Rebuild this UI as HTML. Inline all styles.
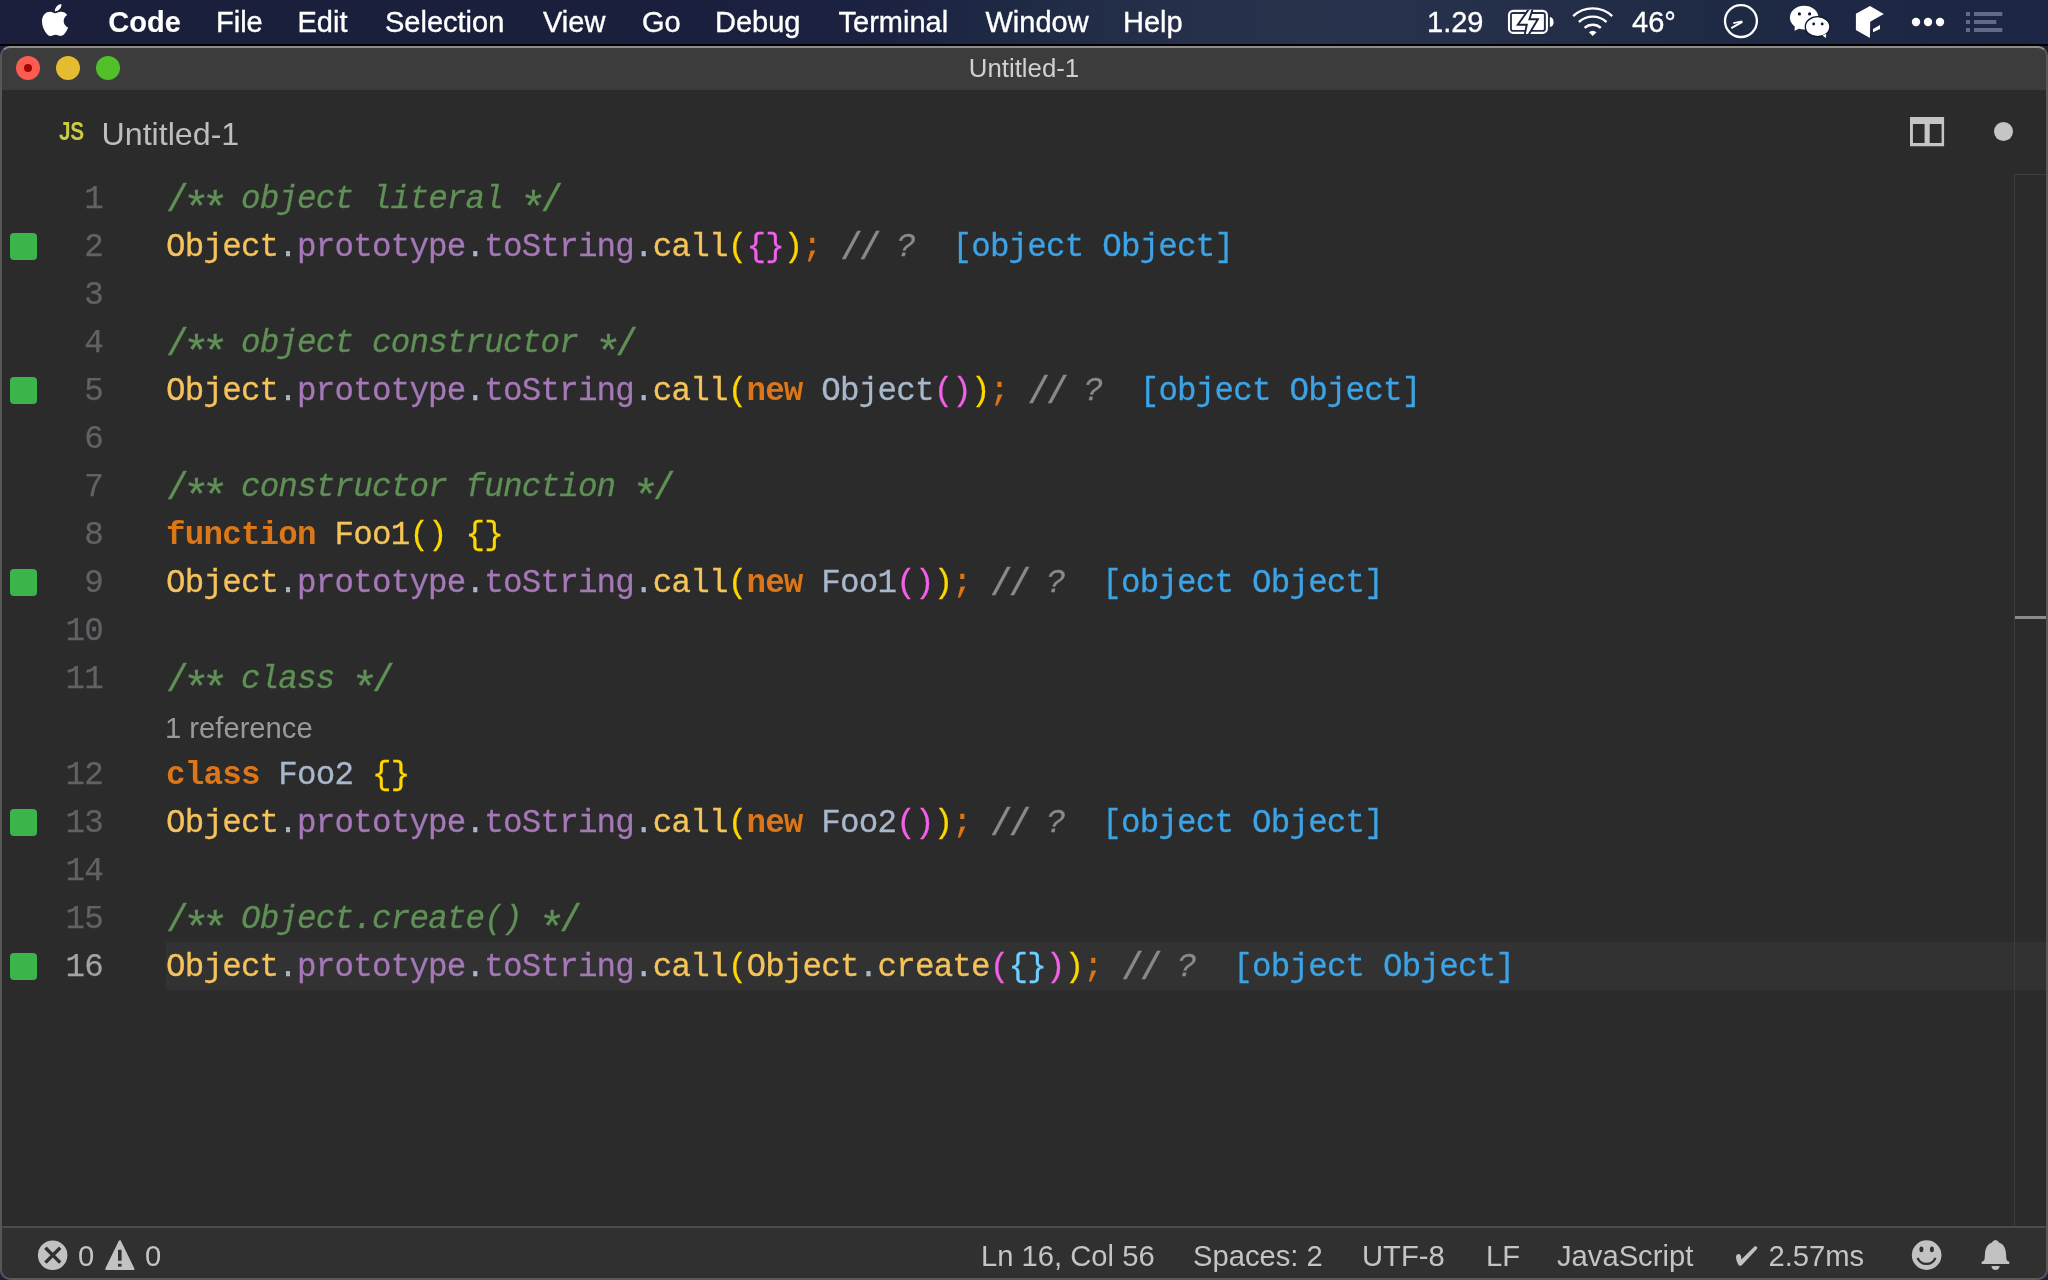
<!DOCTYPE html>
<html><head><meta charset="utf-8">
<style>
*{margin:0;padding:0;box-sizing:border-box}
html,body{width:2048px;height:1280px;overflow:hidden;background:#1b203b}
body{position:relative;font-family:"Liberation Sans",sans-serif;-webkit-font-smoothing:antialiased}
#menubar,#win{will-change:transform}
#menubar{position:absolute;left:0;top:0;width:2048px;height:44px;background:linear-gradient(90deg,#1b1f3b 0%,#1a1f3d 32%,#1b2140 42%,#1e2944 49%,#252f4a 57%,#28324b 64%,#27314b 69%,#1f2a45 83%,#1c2543 100%)}
#menubar .m{position:absolute;top:0;height:44px;line-height:44px;font-size:29px;color:#fff;white-space:pre;-webkit-text-stroke:0.35px #fff}
#menubar svg{position:absolute}
#blackline{position:absolute;left:0;top:44px;width:2048px;height:2px;background:#000}
#win{position:absolute;left:0;top:46px;width:2048px;height:1234px;border-radius:10px;background:#2b2b2b;overflow:hidden}
#frame{position:absolute;left:0;top:46px;width:2048px;height:1234px;border-radius:10px;border:2px solid #575757;border-top-color:#8c8c8c;border-bottom-color:#5a5a5a;pointer-events:none}
#title{position:absolute;left:0;top:0;width:100%;height:44px;background:#3c3c3c}
#title .t{position:absolute;left:0;width:100%;top:0;height:44px;line-height:44px;text-align:center;font-size:25.8px;color:#d0d0d0}
.tl{position:absolute;width:24px;height:24px;border-radius:50%;top:10px}
.ln{position:absolute;left:0;width:103px;height:48px;line-height:48px;text-align:right;font-family:"Liberation Mono",monospace;font-size:32.5px;letter-spacing:-0.783px;color:#606366;-webkit-text-stroke:0.25px currentColor}
.ln.act{color:#a4a3a3}
.cl{position:absolute;left:166px;height:48px;line-height:48px;font-family:"Liberation Mono",monospace;font-size:32.5px;letter-spacing:-0.783px;color:#a9b7c6;white-space:pre;-webkit-text-stroke:0.3px currentColor}
.gs{position:absolute;left:10px;width:27px;height:27px;border-radius:4px;background:#3bb54a}
.kw{color:#dd7616;font-weight:bold;-webkit-text-stroke:0}
.fn{color:#f5c35a}
.pr{color:#a578b8}
.pu{color:#a8b8cc}
.sc{color:#dd7616}
.cm{color:#8a8a8a;font-style:italic}
.dc{color:#5f9055;font-style:italic}
.ast{font-style:normal;font-size:44.8px;line-height:0;letter-spacing:-8.16px;position:relative;left:-1.7px;top:13.6px}
.sl{font-style:normal;font-size:38px;line-height:0;letter-spacing:-4.08px;position:relative;left:0px;top:3px}
.b1{color:#ffd700}
.b2{color:#f060e8}
.b3{color:#6fd0ff}
.id{color:#a8b8cc}
.dec{color:#3ca4e6}
#curline{position:absolute;left:166px;top:896px;width:1881px;height:48px;background:#323232}
#lens{position:absolute;left:165px;top:658px;height:48px;line-height:48px;font-size:29.2px;color:#999;white-space:pre}
#status{position:absolute;left:0;top:1180px;width:100%;height:54px;background:#303030;border-top:2px solid #4b4b4b}
#status .s{position:absolute;top:2.5px;height:50px;line-height:50px;font-size:29.2px;color:#c4c4c4;white-space:pre}
#status svg{position:absolute}
#tab .jsi{position:absolute;left:58.5px;top:42.5px;height:84px;line-height:84px;font-size:26px;letter-spacing:-0.3px;transform:scaleX(0.8);transform-origin:0 0;font-weight:bold;color:#cbcb41}
#tab .tt{position:absolute;left:101.5px;top:46px;height:84px;line-height:84px;font-size:32.2px;color:#bdbdbd;white-space:pre}
#vscroll{position:absolute;left:2014px;top:128px;width:1px;height:1052px;background:#3d3d3d}
#vscrolltop{position:absolute;left:2014px;top:128px;width:33px;height:1px;background:#3d3d3d}
#ruler{position:absolute;left:2015px;top:569.5px;width:33px;height:3.5px;background:#8a8a8a;z-index:5}
</style></head>
<body>
<div id="menubar">
  <svg style="left:42px;top:4px" width="26" height="32" viewBox="0 0 814 1000"><path fill="#fff" d="M788.1 340.9c-5.8 4.5-108.2 62.2-108.2 190.5 0 148.4 130.3 200.9 134.2 202.2-.6 3.2-20.7 71.9-68.7 141.9-42.8 61.6-87.5 123.1-155.5 123.1s-85.5-39.5-164-39.5c-76.5 0-103.7 40.8-165.9 40.8s-105.6-57-155.5-127C46.7 790.7 0 663 0 541.8c0-194.4 126.4-297.5 250.8-297.5 66.1 0 121.2 43.4 162.7 43.4 39.5 0 101.1-46 176.3-46 28.5 0 130.900 2.6 198.3 99.2zm-234-181.5c31.1-36.9 53.1-88.1 53.1-139.3 0-7.1-.6-14.300-1.900-20.100-50.600 1.900-110.800 33.700-147.100 75.800-28.500 32.400-55.100 83.600-55.100 135.500 0 7.800 1.300 15.600 1.900 18.100 3.200.6 8.400 1.300 13.600 1.300 45.400 0 102.500-30.400 135.500-71.300z"/></svg>
  <div class="m" style="left:108.3px;font-weight:bold;-webkit-text-stroke:0.1px #fff">Code</div>
  <div class="m" style="left:216px">File</div>
  <div class="m" style="left:297.5px">Edit</div>
  <div class="m" style="left:385px">Selection</div>
  <div class="m" style="left:543px">View</div>
  <div class="m" style="left:642px">Go</div>
  <div class="m" style="left:715px">Debug</div>
  <div class="m" style="left:838.5px">Terminal</div>
  <div class="m" style="left:985.5px">Window</div>
  <div class="m" style="left:1123px">Help</div>
  <div class="m" style="left:1427px">1.29</div>
  <!-- battery -->
  <svg style="left:1504px;top:6px" width="54" height="32" viewBox="0 0 54 32">
    <defs><clipPath id="bc"><rect x="0" y="3.7" width="54" height="24.4"/></clipPath></defs>
    <rect x="5" y="4.85" width="37.9" height="22" rx="4.2" fill="none" stroke="#fff" stroke-width="2.1"/>
    <rect x="7.9" y="7.9" width="32" height="16" rx="0.8" fill="#fff"/>
    <path d="M45.9 10.9 Q49.6 11.6 49.6 16 Q49.6 20.4 45.9 21.1 Z" fill="#fff"/>
    <g clip-path="url(#bc)"><path d="M31.7 -6.5 L13.8 18.7 L22.8 18.7 L18.5 39 L33.9 13.2 L25.4 13.2 Z" fill="#fff" stroke="#1b2240" stroke-width="1.9" stroke-linejoin="miter"/></g>
  </svg>
  <!-- wifi -->
  <svg style="left:1568px;top:4px" width="50" height="36" viewBox="0 0 50 36">
    <g fill="none" stroke="#fff" stroke-width="2.4">
    <path d="M5.2 12.1 A28.6 28.6 0 0 1 44.2 12.1"/>
    <path d="M10.9 18 A20.4 20.4 0 0 1 38.5 18"/>
    <path d="M16.6 23.9 A12.2 12.2 0 0 1 32.8 23.9"/>
    </g>
    <path d="M24.7 32 L20.9 28.2 A5.4 5.4 0 0 1 28.5 28.2 Z" fill="#fff"/>
  </svg>
  <div class="m" style="left:1632px">46°</div>
  <!-- gauge -->
  <svg style="left:1718px;top:0px" width="46" height="42" viewBox="0 0 46 42">
    <circle cx="22.95" cy="21.05" r="15.95" fill="none" stroke="#fff" stroke-width="2.3"/>
    <path d="M13.3 28.2 L24.3 21.9" stroke="#fff" stroke-width="2"/>
    <path d="M15.3 23.2 L24.3 21.4" stroke="#fff" stroke-width="1.7"/>
  </svg>
  <!-- wechat -->
  <svg style="left:1784px;top:0px" width="52" height="42" viewBox="0 0 52 42">
    <ellipse cx="20.15" cy="17.6" rx="14.25" ry="11.8" fill="#fff"/>
    <path d="M10.8 26.2 L10.5 30.8 L15.6 28.6 Z" fill="#fff"/>
    <circle cx="15.4" cy="13.9" r="1.6" fill="#0e1530"/><circle cx="25.6" cy="13.9" r="1.6" fill="#0e1530"/>
    <ellipse cx="33.6" cy="26.7" rx="12.3" ry="10" fill="#fff" stroke="#0f1631" stroke-width="1.3"/>
    <path d="M38.5 35.6 L41.8 38.1 L42.3 33.8 Z" fill="#fff"/>
    <circle cx="29.7" cy="24" r="1.4" fill="#0e1530"/><circle cx="38.2" cy="24" r="1.4" fill="#0e1530"/>
  </svg>
  <!-- cube -->
  <svg style="left:1850px;top:0px" width="42" height="42" viewBox="0 0 42 42">
    <path d="M20 5.9 L33.8 14.1 L20.2 21.7 L19.9 38.1 L5.9 29.9 L5.9 13.8 Z" fill="#fff"/>
    <path d="M23 28.9 L30 25.1 L30 28.9 L23 32.2 Z" fill="#fff"/>
  </svg>
  <!-- dots -->
  <svg style="left:1908px;top:14px" width="40" height="16" viewBox="0 0 40 16">
    <circle cx="8" cy="8" r="4.2" fill="#fff"/><circle cx="20" cy="8" r="4.2" fill="#fff"/><circle cx="32" cy="8" r="4.2" fill="#fff"/>
  </svg>
  <!-- list -->
  <svg style="left:1965px;top:11px" width="40" height="22" viewBox="0 0 40 22">
    <g fill="#616b89">
    <rect x="1" y="1" width="4" height="4"/><rect x="9" y="1" width="28.3" height="4"/>
    <rect x="1" y="9" width="4" height="4"/><rect x="9" y="9" width="22.3" height="4"/>
    <rect x="1" y="17" width="4" height="4"/><rect x="9" y="17" width="28.3" height="4"/>
    </g>
  </svg>
</div>
<div id="blackline"></div>
<div id="win">
  <div id="title">
    <div class="tl" style="left:16px;background:#fe5b51"><div style="position:absolute;left:8px;top:8px;width:8px;height:8px;border-radius:50%;background:#a10606"></div></div>
    <div class="tl" style="left:56px;background:#e5bc2f"></div>
    <div class="tl" style="left:96px;background:#52c02b"></div>
    <div class="t">Untitled-1</div>
  </div>
  <div id="tab">
    <div class="jsi">JS</div>
    <div class="tt">Untitled-1</div>
    <svg style="position:absolute;left:1910px;top:71px" width="35" height="30" viewBox="0 0 35 30">
      <path fill="#c5c5c5" fill-rule="evenodd" d="M0 0 H34.1 V29.3 H0 Z M2.9 7 V26 H14.6 V7 Z M19.7 7 V26 H31.6 V7 Z"/>
    </svg>
    <div style="position:absolute;left:1993.5px;top:75.5px;width:19.5px;height:19.5px;border-radius:50%;background:#c5c5c5"></div>
  </div>
  <div id="curline"></div>
  <div id="vscroll"></div><div id="vscrolltop"></div><div id="ruler"></div>
<div class="ln" style="top:130px">1</div>
<div class="cl" style="top:130px"><span class="dc"><span class="sl">/</span><span class="ast">*</span><span class="ast">*</span> object literal <span class="ast">*</span><span class="sl">/</span></span></div>
<div class="ln" style="top:178px">2</div>
<div class="cl" style="top:178px"><span class="fn">Object</span><span class="pu">.</span><span class="pr">prototype</span><span class="pu">.</span><span class="pr">toString</span><span class="pu">.</span><span class="fn">call</span><span class="b1">(</span><span class="b2">{}</span><span class="b1">)</span><span class="sc">;</span><span class="id"> </span><span class="cm"><span class="sl">/</span><span class="sl">/</span> ?</span><span class="id">  </span><span class="dec">[object Object]</span></div>
<div class="gs" style="top:187px"></div>
<div class="ln" style="top:226px">3</div>
<div class="cl" style="top:226px"></div>
<div class="ln" style="top:274px">4</div>
<div class="cl" style="top:274px"><span class="dc"><span class="sl">/</span><span class="ast">*</span><span class="ast">*</span> object constructor <span class="ast">*</span><span class="sl">/</span></span></div>
<div class="ln" style="top:322px">5</div>
<div class="cl" style="top:322px"><span class="fn">Object</span><span class="pu">.</span><span class="pr">prototype</span><span class="pu">.</span><span class="pr">toString</span><span class="pu">.</span><span class="fn">call</span><span class="b1">(</span><span class="kw">new</span><span class="id"> Object</span><span class="b2">()</span><span class="b1">)</span><span class="sc">;</span><span class="id"> </span><span class="cm"><span class="sl">/</span><span class="sl">/</span> ?</span><span class="id">  </span><span class="dec">[object Object]</span></div>
<div class="gs" style="top:331px"></div>
<div class="ln" style="top:370px">6</div>
<div class="cl" style="top:370px"></div>
<div class="ln" style="top:418px">7</div>
<div class="cl" style="top:418px"><span class="dc"><span class="sl">/</span><span class="ast">*</span><span class="ast">*</span> constructor function <span class="ast">*</span><span class="sl">/</span></span></div>
<div class="ln" style="top:466px">8</div>
<div class="cl" style="top:466px"><span class="kw">function</span><span class="id"> </span><span class="fn">Foo1</span><span class="b1">()</span><span class="id"> </span><span class="b1">{}</span></div>
<div class="ln" style="top:514px">9</div>
<div class="cl" style="top:514px"><span class="fn">Object</span><span class="pu">.</span><span class="pr">prototype</span><span class="pu">.</span><span class="pr">toString</span><span class="pu">.</span><span class="fn">call</span><span class="b1">(</span><span class="kw">new</span><span class="id"> Foo1</span><span class="b2">()</span><span class="b1">)</span><span class="sc">;</span><span class="id"> </span><span class="cm"><span class="sl">/</span><span class="sl">/</span> ?</span><span class="id">  </span><span class="dec">[object Object]</span></div>
<div class="gs" style="top:523px"></div>
<div class="ln" style="top:562px">10</div>
<div class="cl" style="top:562px"></div>
<div class="ln" style="top:610px">11</div>
<div class="cl" style="top:610px"><span class="dc"><span class="sl">/</span><span class="ast">*</span><span class="ast">*</span> class <span class="ast">*</span><span class="sl">/</span></span></div>
<div class="ln" style="top:706px">12</div>
<div class="cl" style="top:706px"><span class="kw">class</span><span class="id"> Foo2 </span><span class="b1">{}</span></div>
<div class="ln" style="top:754px">13</div>
<div class="cl" style="top:754px"><span class="fn">Object</span><span class="pu">.</span><span class="pr">prototype</span><span class="pu">.</span><span class="pr">toString</span><span class="pu">.</span><span class="fn">call</span><span class="b1">(</span><span class="kw">new</span><span class="id"> Foo2</span><span class="b2">()</span><span class="b1">)</span><span class="sc">;</span><span class="id"> </span><span class="cm"><span class="sl">/</span><span class="sl">/</span> ?</span><span class="id">  </span><span class="dec">[object Object]</span></div>
<div class="gs" style="top:763px"></div>
<div class="ln" style="top:802px">14</div>
<div class="cl" style="top:802px"></div>
<div class="ln" style="top:850px">15</div>
<div class="cl" style="top:850px"><span class="dc"><span class="sl">/</span><span class="ast">*</span><span class="ast">*</span> Object.create() <span class="ast">*</span><span class="sl">/</span></span></div>
<div class="ln act" style="top:898px">16</div>
<div class="cl" style="top:898px"><span class="fn">Object</span><span class="pu">.</span><span class="pr">prototype</span><span class="pu">.</span><span class="pr">toString</span><span class="pu">.</span><span class="fn">call</span><span class="b1">(</span><span class="fn">Object</span><span class="pu">.</span><span class="fn">create</span><span class="b2">(</span><span class="b3">{}</span><span class="b2">)</span><span class="b1">)</span><span class="sc">;</span><span class="id"> </span><span class="cm"><span class="sl">/</span><span class="sl">/</span> ?</span><span class="id">  </span><span class="dec">[object Object]</span></div>
<div class="gs" style="top:907px"></div>
  <div id="lens">1 reference</div>
  <div id="status">
    <svg style="left:36px;top:8px" width="34" height="34" viewBox="0 0 34 34">
      <circle cx="16.65" cy="19.2" r="14.75" fill="#c2c2c2"/>
      <path d="M9.4 11.8 L24.2 26.6 M24.2 11.8 L9.4 26.6" stroke="#303030" stroke-width="3.4"/>
    </svg>
    <div class="s" style="left:78px">0</div>
    <svg style="left:104px;top:8px" width="34" height="36" viewBox="0 0 34 36">
      <path d="M15.85 5.3 L29.4 32.9 L2.3 32.9 Z" fill="#c2c2c2" stroke="#c2c2c2" stroke-width="2.2" stroke-linejoin="round"/>
      <rect x="14" y="13.8" width="3.6" height="10.9" fill="#303030"/><rect x="14" y="27.8" width="3.6" height="2.8" fill="#303030"/>
    </svg>
    <div class="s" style="left:145px">0</div>
    <div class="s" style="left:981px">Ln 16, Col 56</div>
    <div class="s" style="left:1193px">Spaces: 2</div>
    <div class="s" style="left:1362px">UTF-8</div>
    <div class="s" style="left:1486px">LF</div>
    <div class="s" style="left:1557px">JavaScript</div>
    <svg style="left:1732px;top:14px" width="30" height="28" viewBox="0 0 30 28">
      <path d="M4 15 C4 12.5 6.5 11.5 8 12.5 C9 13.2 9.3 15 9.3 17.5 L22.5 4.6 C23.5 3.6 25.5 4.5 25.3 6 C25 7 24.5 7.5 23.5 8.5 L10.5 22.5 C9.3 24 7.8 24.3 6.8 23.2 C5.5 21.5 4 18 4 15 Z" fill="#c2c2c2"/>
    </svg>
    <div class="s" style="left:1768.5px">2.57ms</div>
    <svg style="left:1908px;top:8px" width="38" height="38" viewBox="0 0 38 38">
      <circle cx="18.65" cy="19.15" r="14.8" fill="#c2c2c2"/>
      <ellipse cx="13.4" cy="13.3" rx="2" ry="2.9" fill="#303030"/><ellipse cx="23.9" cy="13.3" rx="2" ry="2.9" fill="#303030"/>
      <path d="M9.6 21.8 A9.54 9.54 0 0 0 27.4 21.8" fill="none" stroke="#303030" stroke-width="2.3"/>
    </svg>
    <svg style="left:1980px;top:10px" width="32" height="36" viewBox="0 0 32 36">
      <path fill="#c2c2c2" d="M15.5 2 C13.5 2.3 12.5 3.5 12 4.6 C7.5 6 5.3 10.5 5 15.5 L4.6 21 C4.3 22.5 3.5 23.3 1.7 23.8 V26 H29.3 V23.8 C27.5 23.3 26.7 22.5 26.4 21 L26 15.5 C25.7 10.5 23.5 6 19 4.6 C18.5 3.5 17.5 2.3 15.5 2 Z"/>
      <path fill="#c2c2c2" d="M11.4 28 H19.6 C19.4 30.5 17.8 32.1 15.5 32.1 C13.2 32.1 11.6 30.5 11.4 28 Z"/>
    </svg>
  </div>
</div>
<div id="frame"></div>
</body></html>
